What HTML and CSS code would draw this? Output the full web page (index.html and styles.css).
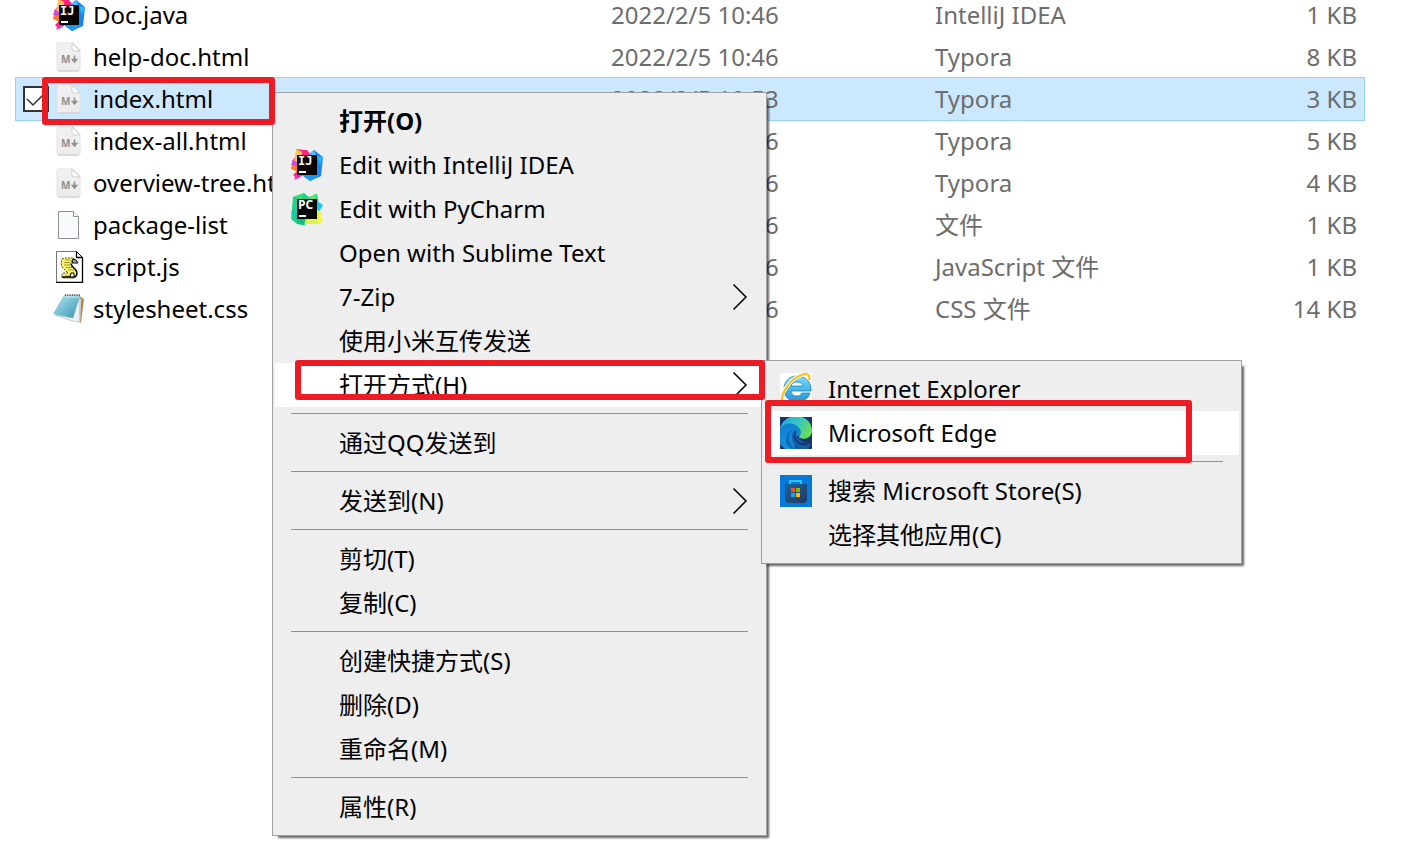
FILE: index.html
```html
<!DOCTYPE html>
<html lang="zh-CN">
<head>
<meta charset="utf-8">
<title>文件</title>
<link rel="stylesheet" href="styles.css">
</head>
<body>
<svg class="defs" aria-hidden="true">
  <defs>
    <linearGradient id="page" x1="0" y1="0" x2="0" y2="1"><stop offset="0" stop-color="#f1f1f1"/><stop offset="1" stop-color="#ececec"/></linearGradient>
    <linearGradient id="note" x1="0" y1="0" x2="1" y2="1"><stop offset="0" stop-color="#b9e2ec"/><stop offset=".5" stop-color="#73bfd3"/><stop offset="1" stop-color="#3b93ae"/></linearGradient>
    <linearGradient id="edgeGreen" x1="0" y1=".2" x2="1" y2=".6"><stop offset="0" stop-color="#22a6dc"/><stop offset=".5" stop-color="#35c6c4"/><stop offset="1" stop-color="#6be04f"/></linearGradient>
    <linearGradient id="edgeBlue" x1="0" y1="0" x2="0" y2="1"><stop offset="0" stop-color="#0d80ce"/><stop offset="1" stop-color="#1a8fdc"/></linearGradient>
    <linearGradient id="ieBlue" x1="0" y1="0" x2="0" y2="1"><stop offset="0" stop-color="#7fd8fa"/><stop offset="1" stop-color="#1c97d8"/></linearGradient>
    <linearGradient id="bag" x1="0" y1="0" x2="1" y2="1"><stop offset="0" stop-color="#1d5f9c"/><stop offset="1" stop-color="#243a60"/></linearGradient>
    <symbol id="md" viewBox="0 0 32 32">
      <path d="M6 2h14l7 7v19a2 2 0 0 1-2 2H6a2 2 0 0 1-2-2V4a2 2 0 0 1 2-2z" fill="url(#page)" stroke="#e2e2e2"/>
      <path d="M5 30h21" stroke="#c9c9c9"/>
      <path d="M19 2v6a2 2 0 0 0 2 2h6z" fill="#fff" stroke="#c4c4c4" stroke-width=".8"/>
      <text x="8" y="22" class="md-letter">M</text>
      <path d="M21.500 14.500v4M19.500 18.500h4l-2 2.500z" stroke="#8f8f8f" stroke-width="1.600" fill="#8f8f8f"/>
    </symbol>
    <symbol id="idea" viewBox="0 0 32 32">
      <path d="M5 0l9 1 4 4-3 19-9 6-4-4 4-4-6-3 3-5-2-2 4-5z" fill="#fd2c76"/>
      <path d="M5 0l6 3-1 8-7 3z" fill="#fdc64b"/><path d="M2 11l4 2-2 4-4-1z" fill="#c44be5"/>
      <path d="M1 17l6-1v7l-7-3z" fill="#ff7c24"/><path d="M7 22l7 3-11 6z" fill="#f92cc0"/>
      <path d="M11 1h5l4 5h-9z" fill="#fb247e"/>
      <path d="M18 5l5-4 9 7-2 19-11 5-7-5z" fill="#1785f5"/><path d="M18 5l5-4 2 6z" fill="#4dc1fb"/><path d="M26 7l6 1-3 8z" fill="#25b7f9"/><path d="M12 26h17l-10 6z" fill="#199bf1"/>
      <path d="M6 6h20v20H6z" fill="#080408"/>
      <text x="7" y="16" class="jb-letter jb-serif">IJ</text><path d="M8 22h7v2H8z" fill="#fff"/>
    </symbol>
    <symbol id="pycharm" viewBox="0 0 32 32">
      <path d="M2 4l11-4 5 4 8-3 2 11-2 15-13 5-7-1-6-5z" fill="#20d18a"/>
      <path d="M5 3l8-3-5 12z" fill="#2be27b"/><path d="M18 5l6-4 3 10z" fill="#62e765"/><path d="M0 20l6-6v14z" fill="#17c9ad"/>
      <path d="M26 8l6 4-4 7-3-3z" fill="#14c9f3"/>
      <path d="M26 16l5 5-3 10H13l-3-5 15-3z" fill="#dff44a"/><path d="M29 18l3 11-6 1z" fill="#f7f33f"/><path d="M5 25h10l-2 7-6-1z" fill="#12c07d"/>
      <path d="M6 6h20v20H6z" fill="#050805"/>
      <text x="7" y="16" class="jb-letter">PC</text><path d="M8 22h7v2H8z" fill="#fff"/>
    </symbol>
    <symbol id="blank" viewBox="0 0 32 32">
      <path d="M5.500 2.500h15l5 5v22h-20z" fill="#f9fafb" stroke="#8d9193"/><path d="M20.500 2.500v5h5" fill="#fff" stroke="#8d9193"/>
    </symbol>
    <symbol id="script" viewBox="0 0 32 32">
      <path d="M3.500.5h20l6 6v25h-26z" fill="#fff" stroke="#777"/><path d="M29.500 6v25.500H3M23.500.5v6h6" fill="none" stroke="#000" stroke-width="1.300"/><path d="M24 1l6 6" stroke="#000"/>
      <path d="M9 8l3-1h9l-3 4v3l5 5 1 4-3 4H10l-2-2 2-3h5l-6-6-1-4z" fill="#f9f36c" stroke="#54500e" stroke-dasharray="2 1"/>
      <path d="M12 9h6M11 11.500h6M11 14h6M13 16.500h6M15 19h6M12 25h5" stroke="#a39b2c"/>
      <path d="M20 8l3 1 2 3h-6z" fill="#a9a9a9" stroke="#000"/><path d="M18 13q1 3 4 5 4 5 0 8H9" fill="none" stroke="#000" stroke-width="1.500"/><path d="M18 22h3v4h-4z" fill="#fff" stroke="#000"/>
    </symbol>
    <symbol id="notepad" viewBox="0 0 32 32">
      <path d="M26 3l5 3-3 24-3-2z" fill="#b9854b"/><path d="M26 5l2 1-1 23-6-2z" fill="#f4f5f6" stroke="#b8bdc0" stroke-width=".6"/>
      <path d="M20 25L27 3l-1 26-7-1L2 22z" fill="#eef2f4" stroke="#a6b2b7" stroke-width=".6"/>
      <path d="M11 2h16l-7 23L0 21z" fill="url(#note)"/><path d="M12 4h14" stroke="#d9f0f5"/><path d="M12 2h15" stroke="#596166" stroke-width="2" stroke-dasharray="1 1.300"/>
    </symbol>
    <symbol id="ie" viewBox="0 0 32 32">
      <path d="M0 0h32v32H0z" fill="#fff"/>
      <path d="M17 3C9 3 4 9 4 16s5 13 13 13c6 0 11-3 13-9h-8c-1 2-3 3-5 3-3 0-6-2-6-5h20C32 9 25 3 17 3zm-6 10c1-3 3-4 6-4s5 1 6 4z" fill="url(#ieBlue)" stroke="#1782bd" stroke-width=".8" fill-rule="evenodd"/>
      <path d="M2 31C-1 23 8 8 19 3c6-3 12-3 10 4" fill="none" stroke="#fff" stroke-width="4"/>
      <path d="M3 30C-1 24 8 8 19 3c6-3 12-3 10 4" fill="none" stroke="#f7c31c" stroke-width="2.300"/>
    </symbol>
    <symbol id="edge" viewBox="0 0 32 32">
      <path d="M0 0h32v32H0z" fill="#17346d"/>
      <path d="M0 11C4-1 17-4 26 2c5 4 6 8 6 13-1 6-7 8-12 6-2-1-1-2 0-3 2-5-2-9-6-10z" fill="url(#edgeGreen)"/>
      <path d="M0 12C4 5 14 5 18 10c3 3 3 6 2 8l-6 3 1 11H5L0 27z" fill="url(#edgeBlue)"/>
      <path d="M14 12c-7 3-7 13 0 18l4 2h-6C3 28 4 15 14 12z" fill="#0b6cbd"/>
      <path d="M15 13c-5 4-4 14 3 19h10l3-6c-3 1-9 0-11-4-3-1-5-4-3-8z" fill="#155ca6"/>
      <path d="M17 14c-3 3-2 8 2 11 4 2 9 2 12 0-4 5-12 4-15-1-3-4-2-8 1-10z" fill="#17346d"/>
    </symbol>
    <symbol id="store" viewBox="0 0 32 32">
      <path d="M0 0h32v32H0z" fill="#0479d9"/>
      <path d="M10 9V6h11v3" fill="none" stroke="#25c4f4" stroke-width="2"/>
      <path d="M5 9h22v15a4 4 0 0 1-4 4H9a4 4 0 0 1-4-4z" fill="url(#bag)"/>
      <path d="M11 13h4v4h-4z" fill="#f25022"/><path d="M16 13h4v4h-4z" fill="#7fba00"/><path d="M11 18h4v4h-4z" fill="#12a7f0"/><path d="M16 18h4v4h-4z" fill="#ffb900"/>
    </symbol>
    <symbol id="chevron" viewBox="0 0 16 28"><path d="M1.500 1.500L14 14 1.500 26.500" fill="none" stroke="#000" stroke-width="1.500"/></symbol>
  </defs>
</svg>

<main class="explorer">
  <table class="files">
    <colgroup><col class="col-check"><col class="col-name"><col class="col-date"><col class="col-type"><col class="col-size"></colgroup>
    <tbody>
      <tr class="first"><td></td><td class="name"><span class="file"><svg class="icon"><use href="#idea"/></svg>Doc.java</span></td><td>2022/2/5 10:46</td><td>IntelliJ IDEA</td><td class="size">1 KB</td></tr>
      <tr><td></td><td class="name"><span class="file"><svg class="icon"><use href="#md"/></svg>help-doc.html</span></td><td>2022/2/5 10:46</td><td>Typora</td><td class="size">8 KB</td></tr>
      <tr class="selected"><td><input class="check" type="checkbox" id="pick" checked></td><td class="name"><label class="file" for="pick"><svg class="icon"><use href="#md"/></svg>index.html</label></td><td>2022/2/5 10:53</td><td>Typora</td><td class="size">3 KB</td></tr>
      <tr><td></td><td class="name"><span class="file"><svg class="icon"><use href="#md"/></svg>index-all.html</span></td><td>2022/2/5 10:46</td><td>Typora</td><td class="size">5 KB</td></tr>
      <tr><td></td><td class="name"><span class="file"><svg class="icon"><use href="#md"/></svg>overview-tree.html</span></td><td>2022/2/5 10:46</td><td>Typora</td><td class="size">4 KB</td></tr>
      <tr><td></td><td class="name"><span class="file"><svg class="icon"><use href="#blank"/></svg>package-list</span></td><td>2022/2/5 10:46</td><td>文件</td><td class="size">1 KB</td></tr>
      <tr><td></td><td class="name"><span class="file"><svg class="icon"><use href="#script"/></svg>script.js</span></td><td>2022/2/5 10:46</td><td>JavaScript 文件</td><td class="size">1 KB</td></tr>
      <tr><td></td><td class="name"><span class="file"><svg class="icon"><use href="#notepad"/></svg>stylesheet.css</span></td><td>2022/2/5 10:46</td><td>CSS 文件</td><td class="size">14 KB</td></tr>
    </tbody>
  </table>

  <div class="menu menu-main">
    <button class="item item-default">打开(O)</button>
    <button class="item"><svg class="icon"><use href="#idea"/></svg>Edit with IntelliJ IDEA</button>
    <button class="item"><svg class="icon"><use href="#pycharm"/></svg>Edit with PyCharm</button>
    <button class="item">Open with Sublime Text</button>
    <button class="item">7-Zip<svg class="chevron"><use href="#chevron"/></svg></button>
    <button class="item">使用小米互传发送</button>
    <button class="item item-active">打开方式(H)<svg class="chevron"><use href="#chevron"/></svg></button>
    <hr>
    <button class="item">通过QQ发送到</button>
    <hr>
    <button class="item">发送到(N)<svg class="chevron"><use href="#chevron"/></svg></button>
    <hr>
    <button class="item">剪切(T)</button>
    <button class="item">复制(C)</button>
    <hr>
    <button class="item">创建快捷方式(S)</button>
    <button class="item">删除(D)</button>
    <button class="item">重命名(M)</button>
    <hr>
    <button class="item">属性(R)</button>
  </div>

  <div class="menu menu-sub">
    <button class="item"><svg class="icon"><use href="#ie"/></svg>Internet Explorer</button>
    <button class="item item-active"><svg class="icon"><use href="#edge"/></svg>Microsoft Edge</button>
    <hr>
    <button class="item"><svg class="icon"><use href="#store"/></svg>搜索 Microsoft Store(S)</button>
    <button class="item">选择其他应用(C)</button>
  </div>

  <div class="mark mark-file"></div>
  <div class="mark mark-open-with"></div>
  <div class="mark mark-edge"></div>
</main>
</body>
</html>
```
FILE: styles.css
```css
* { box-sizing: border-box; }

body {
  margin: 0;
  background: #fff;
  color: #000;
  font: 24px/32px "Noto Sans", "Noto Sans CJK SC", sans-serif;
}

.defs { position: absolute; width: 0; height: 0; }

.explorer {
  position: relative;
  min-height: 100vh;
  padding: 0 55px 0 16px;
  overflow: hidden;
}

.files {
  width: 100%;
  border-collapse: collapse;
  table-layout: fixed;
  color: #6d6d6d;
}
.files tr { height: 42px; }
.files td { padding: 0; white-space: nowrap; }
.col-check { width: 37px; }
.col-name { width: 558px; }
.col-date { width: 324px; }
.col-size { width: 160px; }
.files .name { color: #000; }
.files .size { padding-right: 7px; text-align: right; }
.file { display: flex; align-items: center; gap: 8px; }
.selected { background: #cce8ff; outline: 1px solid #99d1ff; }

/* The list is scrolled a little past the top of its first row. */
.files .first { height: 36px; line-height: 30px; vertical-align: top; }
.first .file { height: 30px; }

.check {
  display: block;
  width: 26px;
  height: 26px;
  margin: 0 0 0 7px;
  border: 2px solid #333;
  background: #fff;
  appearance: none;
}
.check:checked {
  background: #fff url("data:image/svg+xml,%3Csvg xmlns='http://www.w3.org/2000/svg' viewBox='0 0 22 22'%3E%3Cpath d='M2 11l6 6L20 5' fill='none' stroke='%23333' stroke-width='1.5'/%3E%3C/svg%3E");
}

.icon { flex: none; width: 32px; height: 32px; }
.md-letter { font: 700 10px "Open Sans", sans-serif; fill: #8f8f8f; }
.jb-letter { font: 700 12px "Open Sans", sans-serif; fill: #fff; }
.jb-serif { font-family: "DejaVu Sans Mono", monospace; }

.menu {
  position: absolute;
  padding: 6px 2px;
  border: 1px solid #a0a0a0;
  background: #eee;
  box-shadow: 4px 4px 2px -2px rgba(0, 0, 0, .6);
}
.menu-main { top: 92px; left: 272px; width: 495px; }
.menu-sub { top: 360px; left: 761px; width: 481px; }

.menu hr {
  height: 1px;
  margin: 6px 16px 7px;
  border: 0;
  background: #919191;
}

.item {
  display: flex;
  align-items: center;
  width: 100%;
  height: 44px;
  padding: 0 16px 0 64px;
  border: 0;
  background: none;
  color: #000;
  font: inherit;
  text-align: left;
  white-space: nowrap;
}
.item .icon { margin: 0 16px 0 -48px; }
.item-active { background: #fff; }
.item-default { font-weight: 700; }
.chevron { width: 16px; height: 28px; margin-left: auto; }

.mark {
  position: absolute;
  border: 6px solid #ed1c24;
  border-radius: 3px;
  pointer-events: none;
}
.mark-file { top: 77px; left: 42px; width: 233px; height: 48px; }
.mark-open-with { top: 360px; left: 295px; width: 470px; height: 40px; }
.mark-edge { top: 400px; left: 765px; width: 427px; height: 63px; }
```
